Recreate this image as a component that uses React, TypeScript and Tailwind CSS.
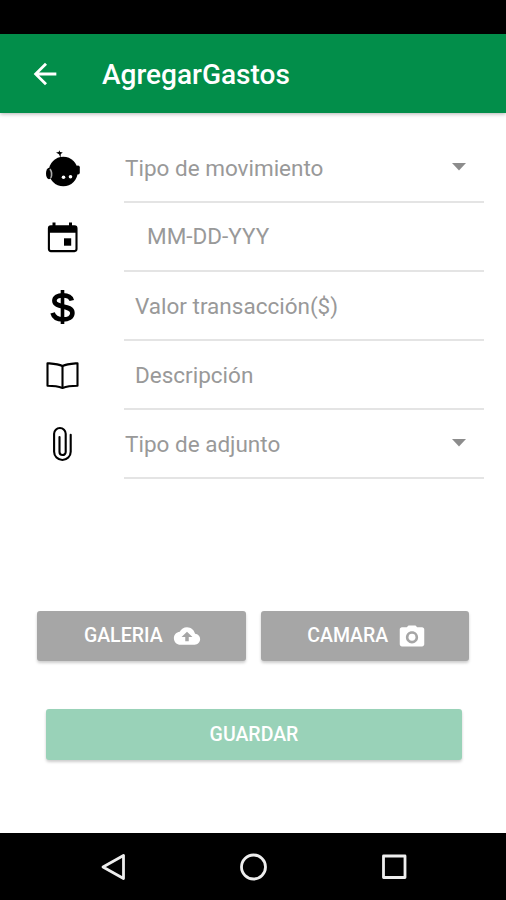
import type { ReactNode } from "react";
import { IoMdCamera, IoMdCloudUpload } from "react-icons/io";
import { MdArrowBack } from "react-icons/md";

function RobotIcon() {
  return (
    <svg width="36" height="38" viewBox="0 0 36 38">
      <path d="M11 2.600 13.700 2l.6-1.700.8 1.700 2.700.6-2 1.500-.3 3.600-1.500-3.400z" fill="#000" />
      <ellipse cx="18.300" cy="21.500" rx="14.500" ry="14.700" fill="#000" />
      <ellipse cx="4" cy="23.500" rx="3" ry="5.700" fill="#000" />
      <rect x="31" y="15.500" width="3.800" height="9" rx="1.800" fill="#000" />
      <path d="M5 19c1.800 2.600 2 6.200.8 9" fill="none" stroke="#aaa" strokeWidth="1.600" />
      <circle cx="18.500" cy="27.300" r="1.800" fill="#fff" />
      <circle cx="25.500" cy="26.700" r="1.800" fill="#fff" />
    </svg>
  );
}

function CalendarIcon() {
  return (
    <svg width="32" height="32" viewBox="0 0 32 32" className="mb-0.5">
      <rect x="1.900" y="5.400" width="27.600" height="24.700" rx="2" fill="none" stroke="#000" strokeWidth="2.100" />
      <path d="M2 5h27.500v6.800H2zM5.500 1.500h3V6h-3zM22 1.500h3V6h-3z" fill="#000" />
      <rect x="17" y="17.300" width="7.200" height="7.400" fill="#000" />
    </svg>
  );
}

function MoneyIcon() {
  return (
    <svg width="30" height="36" viewBox="0 0 30 36" fill="none" stroke="#000">
      <path
        d="M23.800 11.500C22.800 7.800 19.500 6.400 14.800 6.400c-5 0-8.400 1.900-8.400 5.400 0 7.700 18 3.400 18 12.100 0 4.200-4.200 6.500-9.400 6.500-5.600 0-9.300-1.900-10.400-6.500"
        strokeWidth="4.600"
      />
      <path d="M14.500 1v34" strokeWidth="3.600" />
    </svg>
  );
}

function BookIcon() {
  return (
    <svg width="34" height="30" viewBox="0 0 34 30" fill="none" stroke="#000" strokeWidth="2.100" strokeLinejoin="round">
      <path d="M16.500 5C12 3 6.500 2.700 1.500 2.200v22.500c5.500 0 10.500.5 15 2.300 4.500-1.800 9.500-2.300 15-2.300V2.200C26.500 2.700 21 3 16.500 5z" />
      <path d="M16.500 5v22" />
    </svg>
  );
}

function ClipIcon() {
  return (
    <svg width="22" height="36" viewBox="0 0 22 36" fill="none" stroke="#000" strokeWidth="2.100" strokeLinecap="round" className="mr-0.5 mb-0.5">
      <path d="M19.700 8.800v16.900a8.300 8.300 0 0 1-16.600 0V7.800a5.800 5.800 0 0 1 11.600 0V26a3.100 3 0 0 1-6.200 0V11" />
    </svg>
  );
}

type RowProps = {
  icon: ReactNode;
  label: string;
  indent?: string;
  select?: boolean;
};

function Row({ icon, label, indent = "ml-px mt-0.5", select }: RowProps) {
  return (
    <div className="flex h-[69px]">
      <div className="flex w-[124px] shrink-0 items-center justify-center pl-px">{icon}</div>
      <div className="mr-[22px] flex flex-1 items-center justify-between border-b-2 border-[#e4e4e4] pr-[18px]">
        <span className={`text-[22.500px] leading-none text-[#999] ${indent}`}>{label}</span>
        {select && (
          <svg width="14" height="8" viewBox="0 0 14 8" className="mb-0.5">
            <path d="M0 0h14L7 7.500z" fill="#8c8c8c" />
          </svg>
        )}
      </div>
    </div>
  );
}

export default function App() {
  return (
    <div className="flex h-[900px] w-[506px] flex-col bg-white font-['Roboto',sans-serif]">
      {/* Status bar */}
      <div className="h-[34px] shrink-0 bg-black" />

      {/* Toolbar */}
      <header className="flex h-[79px] shrink-0 items-center bg-[#028e4a] pl-7 text-white shadow-[0_1px_4px_rgba(0,0,0,0.3)]">
        <MdArrowBack size={34} />
        <h1 className="mt-0.5 ml-10 text-[28px] leading-none font-medium">AgregarGastos</h1>
      </header>

      {/* Form */}
      <main className="flex flex-1 flex-col pt-[21px]">
        <Row icon={<RobotIcon />} label="Tipo de movimiento" select />
        <Row icon={<CalendarIcon />} label="MM-DD-YYY" indent="ml-[23px]" />
        <Row icon={<MoneyIcon />} label="Valor transacción($)" indent="ml-[11px] mt-0.5" />
        <Row icon={<BookIcon />} label="Descripción" indent="ml-[11px] mt-0.5" />
        <Row icon={<ClipIcon />} label="Tipo de adjunto" select />

        <div className="mt-[132px] flex gap-[15px] px-[37px] text-[19.500px] leading-none font-medium text-white">
          <button className="flex h-[50px] w-[209px] items-center justify-center gap-2.5 rounded-[3px] bg-[#a6a6a6] pl-0.5 shadow-[0_2px_3px_rgba(0,0,0,0.2)]">
            GALERIA
            <IoMdCloudUpload size={28} />
          </button>
          <button className="flex h-[50px] w-[209px] items-center justify-center gap-2.5 rounded-[3px] bg-[#a6a6a6] pl-1 shadow-[0_2px_3px_rgba(0,0,0,0.2)]">
            CAMARA
            <IoMdCamera size={28} />
          </button>
        </div>
        <button className="mt-12 ml-[46px] h-[51px] w-[416px] rounded-[3px] bg-[#99d2b8] text-[19.500px] leading-none font-medium text-white shadow-[0_2px_3px_rgba(0,0,0,0.2)]">
          GUARDAR
        </button>
      </main>

      {/* Android navigation */}
      <nav className="flex h-[67px] shrink-0 items-center justify-between bg-black pr-[98px] pl-[100px]">
        <svg width="28" height="28" viewBox="0 0 28 28" fill="none" stroke="#eee" strokeWidth="2.800" strokeLinejoin="round">
          <path d="M23.500 2.500v23L3 14z" />
        </svg>
        <svg width="28" height="28" viewBox="0 0 28 28" fill="none" stroke="#eee" strokeWidth="2.800">
          <circle cx="13.500" cy="14" r="12" />
        </svg>
        <svg width="28" height="28" viewBox="0 0 28 28" fill="none" stroke="#eee" strokeWidth="2.800" strokeLinejoin="round">
          <rect x="3.500" y="3" width="21.500" height="21.500" />
        </svg>
      </nav>
    </div>
  );
}
